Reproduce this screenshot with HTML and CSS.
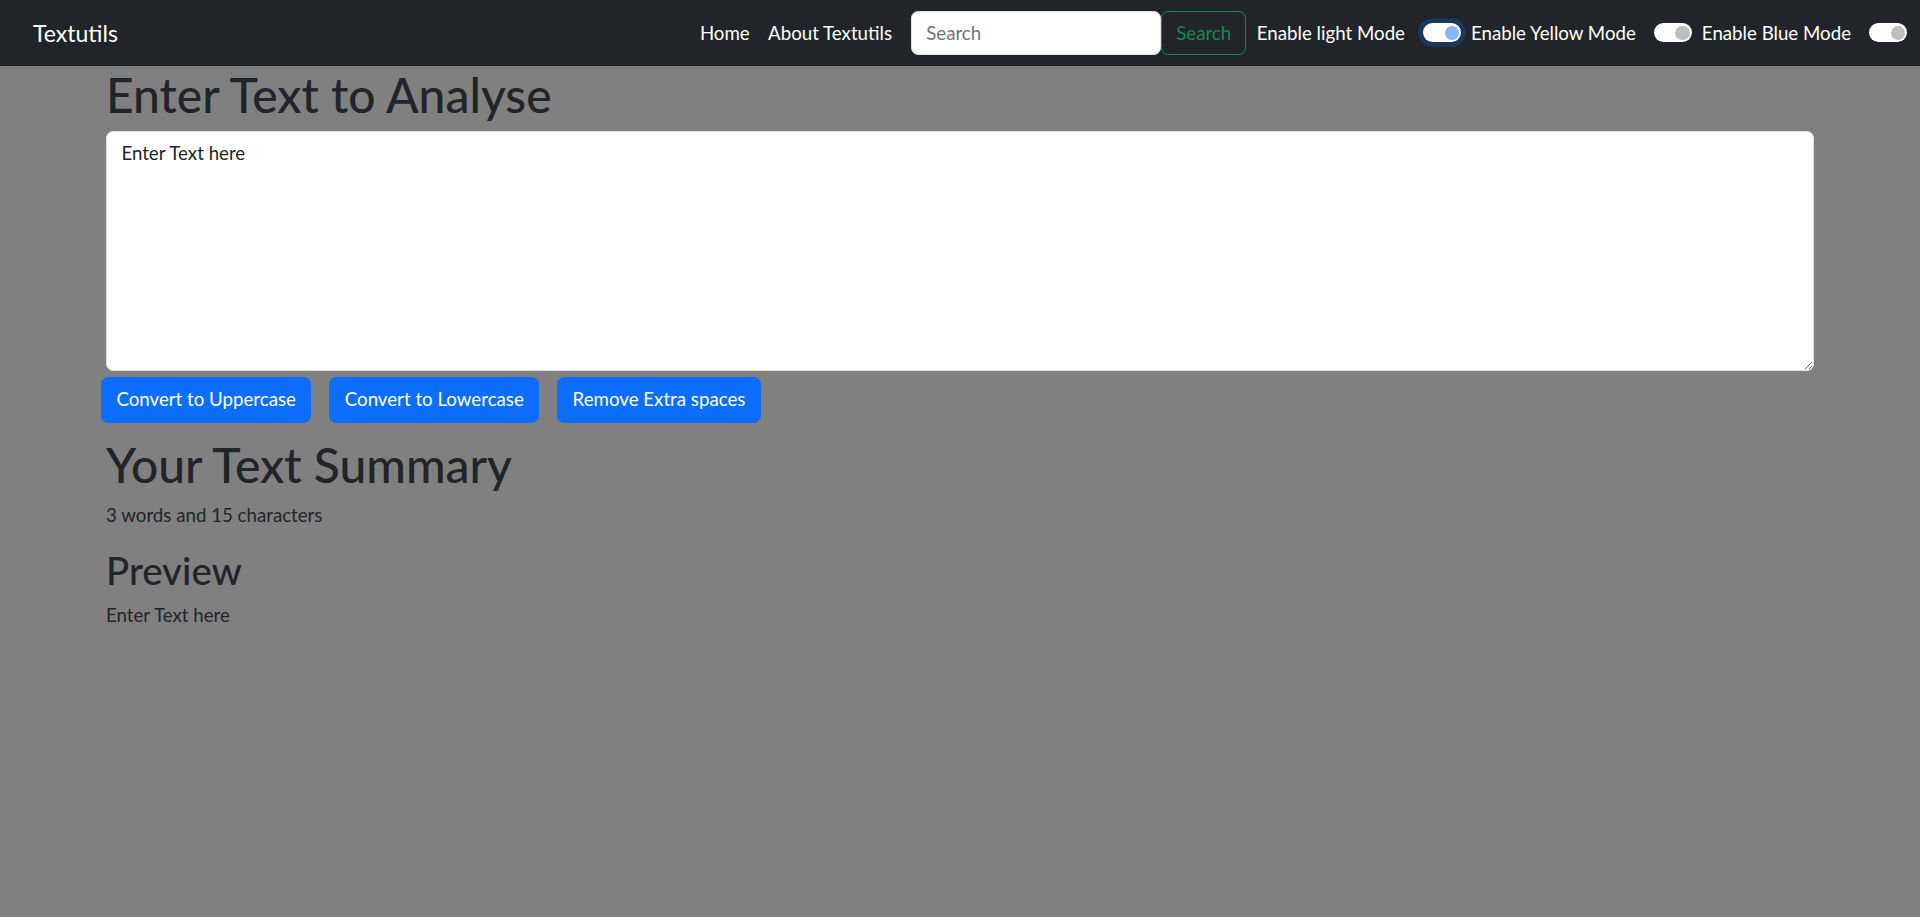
FILE: index.html
```html
<!DOCTYPE html>
<html lang="en">
<head>
<meta charset="utf-8">
<title>Textutils</title>
<link rel="stylesheet" href="styles.css">
</head>
<body>
<nav class="navbar">
  <a class="brand" href="#">Textutils</a>
  <div class="nav-right">
    <ul class="nav-links">
      <li><a href="#">Home</a></li>
      <li><a href="#">About Textutils</a></li>
    </ul>
    <form class="search">
      <input class="search-input" type="search" placeholder="Search">
      <button class="search-btn" type="button">Search</button>
    </form>
    <div class="mode mode-first">
      <span class="mode-label">Enable light Mode</span>
      <span class="switch switch-focus"><span class="knob"></span></span>
    </div>
    <div class="mode">
      <span class="mode-label">Enable Yellow Mode</span>
      <span class="switch"><span class="knob"></span></span>
    </div>
    <div class="mode">
      <span class="mode-label">Enable Blue Mode</span>
      <span class="switch"><span class="knob"></span></span>
    </div>
  </div>
</nav>
<main class="container">
  <h1 class="title">Enter Text to Analyse</h1>
  <textarea class="text-box">Enter Text here</textarea>
  <div class="actions">
    <button class="btn" type="button">Convert to Uppercase</button>
    <button class="btn" type="button">Convert to Lowercase</button>
    <button class="btn" type="button">Remove Extra spaces</button>
  </div>
  <h1 class="title">Your Text Summary</h1>
  <p class="summary">3 words and 15 characters</p>
  <h2 class="subtitle">Preview</h2>
  <p class="preview">Enter Text here</p>
</main>
</body>
</html>
```
FILE: styles.css
```css
* { box-sizing: border-box; }
html, body { margin: 0; padding: 0; }
body {
  background: #808080;
  color: #212529;
  font-family: Lato, "Open Sans", "Liberation Sans", sans-serif;
  font-size: 18.7px;
  line-height: 28.8px;
  min-height: 917px;
}
.navbar {
  height: 66px;
  background: #212529;
  display: flex;
  align-items: center;
  padding-left: 33px;
  padding-right: 13px;
}
.brand {
  color: #fff;
  text-decoration: none;
  font-size: 23px;
  line-height: 30px;
}
.nav-right {
  margin-left: auto;
  display: flex;
  align-items: center;
}
.nav-links {
  list-style: none;
  margin: 0;
  padding: 0;
  display: flex;
}
.nav-links a {
  display: block;
  padding: 0 9.2px;
  color: #fff;
  text-decoration: none;
}
.search {
  display: flex;
  margin: 0 0 0 9.6px;
}
.search-input {
  width: 250px;
  height: 44px;
  border: 1px solid #dee2e6;
  border-radius: 7.2px;
  padding: 0 14.4px;
  font: inherit;
  color: #212529;
  background: #fff;
  outline: none;
}
.search-input::placeholder { color: #6c757d; }
.search-btn {
  width: 85px;
  height: 44px;
  border: 1px solid #198754;
  border-radius: 7.2px;
  background: transparent;
  color: #198754;
  font: inherit;
  padding: 0 14.4px;
}
.mode {
  display: flex;
  align-items: center;
  margin-left: 10px;
}
.mode-first { margin-left: 11px; }
.mode-label {
  color: #fff;
  margin-right: 18px;
  white-space: nowrap;
}
.switch {
  width: 38px;
  height: 19px;
  border-radius: 10px;
  background: #fff;
  display: flex;
  align-items: center;
  justify-content: flex-end;
  padding-right: 2px;
}
.knob {
  width: 14.4px;
  height: 14.4px;
  border-radius: 50%;
  background: #bfbfbf;
}
.switch-focus {
  box-shadow: 0 0 0 4.8px #1c375d;
}
.switch-focus .knob { background: #86b7fe; }

.container {
  width: 1708px;
  margin: 0 auto;
}
.title {
  font-size: 48px;
  line-height: 57.6px;
  font-weight: 500;
  margin: 0 0 7.4px;
}
.text-box {
  display: block;
  width: 100%;
  height: 240px;
  border: 1px solid #dee2e6;
  border-radius: 7.2px;
  padding: 7.2px 14.4px;
  font: inherit;
  color: #212529;
  background: #fff;
  margin: 0 0 6px;
  resize: vertical;
}
.actions {
  display: flex;
  gap: 18px;
  margin: 0 0 13.4px -5px;
}
.btn {
  height: 45.6px;
  padding: 0 14.4px;
  border: 1px solid #0d6efd;
  border-radius: 7.2px;
  background: #0d6efd;
  color: #fff;
  font: inherit;
}
.summary {
  margin: 0 0 17.2px;
}
.subtitle {
  font-size: 38.4px;
  line-height: 46.08px;
  font-weight: 500;
  margin: 0 0 8px;
}
.preview { margin: 0; }
```
